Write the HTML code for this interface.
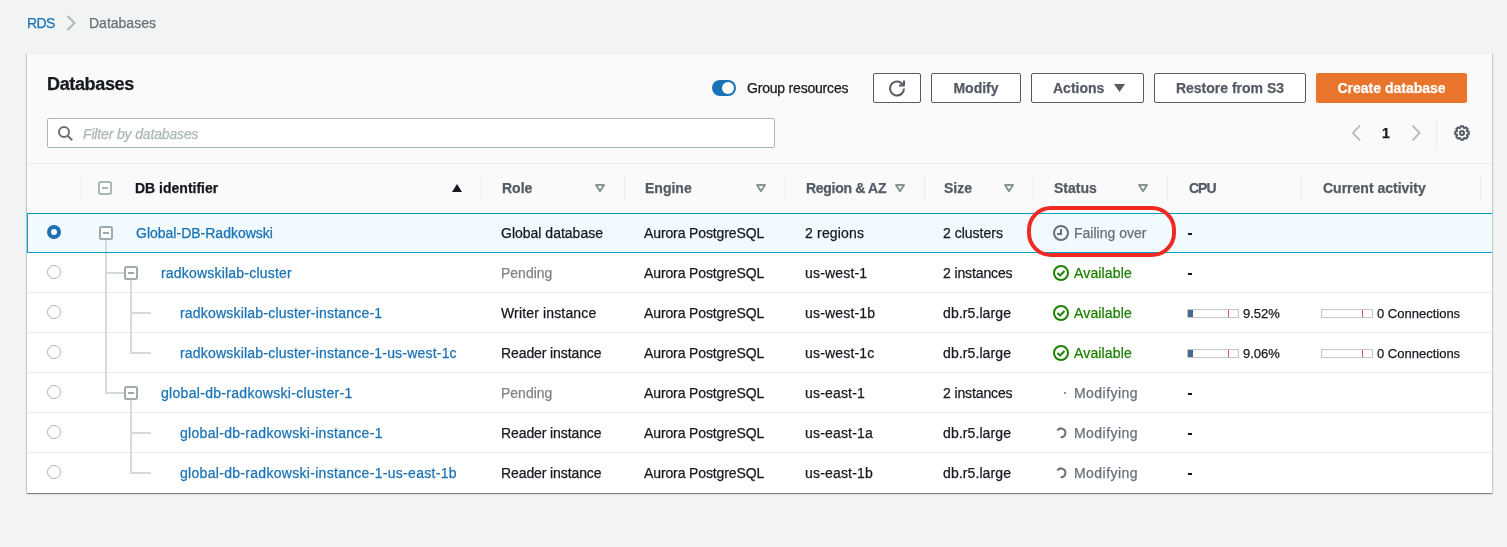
<!DOCTYPE html>
<html><head><meta charset="utf-8">
<style>
*{box-sizing:border-box;margin:0;padding:0}
html,body{-webkit-font-smoothing:antialiased;-webkit-text-stroke:0.25px currentColor;width:1507px;height:547px;overflow:hidden;background:#f2f3f3;font-family:"Liberation Sans",sans-serif;font-size:14px;color:#16191f}
.a{position:absolute;white-space:nowrap}
svg{position:absolute;overflow:visible}
#panel{position:absolute;left:27px;top:53px;width:1465px;height:440px;border-top:1px solid #eaeded;background:#fafafa;box-shadow:0 1px 1px 0 rgba(0,28,36,.3),1px 1px 1px 0 rgba(0,28,36,.15),-1px 1px 1px 0 rgba(0,28,36,.15)}
.btn{position:absolute;top:73px;height:30px;border:1px solid #545b64;border-radius:2px;background:#fff;color:#545b64;font-weight:700;line-height:28px;text-align:center}
.hdr{position:absolute;top:164px;line-height:49px;font-weight:700;color:#545b64}
.div{position:absolute;top:176px;width:1px;height:24px;background:#eaeded}
.row{position:absolute;left:27px;width:1465px;height:40px;background:#fff;border-top:1px solid #eaeded}
.c{position:absolute;line-height:40px;white-space:nowrap}
.lnk{color:#1a72b5}
</style></head><body><div style="position:absolute;left:0;top:0;width:1507px;height:547px;will-change:transform">
<!-- breadcrumb -->
<div class="a" style="left:27px;top:13px;line-height:20px;letter-spacing:-0.6px;color:#1a72b5">RDS</div>
<svg style="left:0;top:0" width="1" height="1"><polyline points="67.5,16 74.5,23 67.5,30" fill="none" stroke="#aab7b8" stroke-width="1.9"/></svg>
<div class="a" style="left:89px;top:13px;line-height:20px;color:#687078">Databases</div>

<div id="panel"></div>
<div class="a" style="left:47px;top:72px;line-height:24px;font-size:18px;font-weight:700;letter-spacing:-0.35px;color:#16191f">Databases</div>

<!-- toggle -->
<div class="a" style="left:712px;top:80px;width:24px;height:16px;border-radius:8px;background:#1a72b5"></div>
<div class="a" style="left:722px;top:82px;width:12px;height:12px;border-radius:6px;background:#fff"></div>
<div class="a" style="left:747px;top:78px;line-height:20px;letter-spacing:-0.2px;color:#16191f">Group resources</div>

<div class="btn" style="left:873px;width:48px"></div>
<svg style="left:889px;top:80px" width="16" height="16" viewBox="0 0 16 16"><path d="M10 5.5h5V0.5" fill="none" stroke="#545b64" stroke-width="2" stroke-linejoin="round"/><path d="M15 8.5a7 7 0 1 1-3.5-6.06L14.5 5" fill="none" stroke="#545b64" stroke-width="2"/></svg>
<div class="btn" style="left:931px;width:90px">Modify</div>
<div class="btn" style="left:1031px;width:113px;text-align:left;padding-left:21px">Actions</div>
<svg style="left:1114px;top:84px" width="11" height="8"><polygon points="0,0 11,0 5.5,8" fill="#545b64"/></svg>
<div class="btn" style="left:1154px;width:152px">Restore from S3</div>
<div class="btn" style="left:1316px;width:151px;background:#e9742b;border-color:#e9742b;color:#fff">Create database</div>

<!-- filter -->
<div class="a" style="left:47px;top:118px;width:728px;height:30px;background:#fff;border:1px solid #aab7b8;border-radius:2px"></div>
<svg style="left:56px;top:124px" width="16" height="16" viewBox="0 0 16 16"><circle cx="8" cy="8" r="5" fill="none" stroke="#687078" stroke-width="2"/><path d="M11.5 11.5 16.2 16.2" stroke="#687078" stroke-width="2"/></svg>
<div class="a" style="left:83px;top:124px;line-height:20px;font-style:italic;letter-spacing:-0.15px;color:#aab7b8">Filter by databases</div>

<!-- pagination -->
<svg style="left:0;top:0" width="1" height="1"><polyline points="1360,125.5 1353,133 1360,140.5" fill="none" stroke="#aab7b8" stroke-width="1.8"/><polyline points="1412.5,125.5 1419.5,133 1412.5,140.5" fill="none" stroke="#aab7b8" stroke-width="1.8"/></svg>
<div class="a" style="left:1382px;top:123px;line-height:20px;font-weight:700;color:#16191f">1</div>
<div class="a" style="left:1436px;top:118px;width:1px;height:30px;background:#eaeded"></div>
<svg style="left:1454px;top:125px" width="16" height="16" viewBox="0 0 16 16"><path d="M6.24 2.89 L6.80 1.20 L9.20 1.20 L9.76 2.89 L10.37 3.15 L11.96 2.35 L13.65 4.04 L12.85 5.63 L13.11 6.24 L14.80 6.80 L14.80 9.20 L13.11 9.76 L12.85 10.37 L13.65 11.96 L11.96 13.65 L10.37 12.85 L9.76 13.11 L9.20 14.80 L6.80 14.80 L6.24 13.11 L5.63 12.85 L4.04 13.65 L2.35 11.96 L3.15 10.37 L2.89 9.76 L1.20 9.20 L1.20 6.80 L2.89 6.24 L3.15 5.63 L2.35 4.04 L4.04 2.35 L5.63 3.15Z" fill="none" stroke="#545b64" stroke-width="2" stroke-linejoin="round"/><circle cx="8" cy="8" r="2" fill="none" stroke="#545b64" stroke-width="2"/></svg>

<!-- table header -->
<div class="a" style="left:27px;top:163px;width:1465px;height:1px;background:#eaeded"></div>
<div class="div" style="left:81px"></div>
<svg style="left:98px;top:181px" width="14" height="14" viewBox="0 0 14 14"><rect x="1" y="1" width="12" height="12" rx="1.5" fill="#fff" stroke="#aab7b8" stroke-width="2"/><rect x="4" y="6" width="6" height="2" fill="#aab7b8"/></svg>
<div class="hdr" style="left:135px;color:#16191f">DB identifier</div>
<svg style="left:452px;top:184px" width="10" height="8"><polygon points="5,0 10,8 0,8" fill="#16191f"/></svg>
<div class="div" style="left:481px"></div>
<div class="hdr" style="left:502px">Role</div>
<div class="div" style="left:624px"></div>
<div class="hdr" style="left:645px">Engine</div>
<div class="div" style="left:785px"></div>
<div class="hdr" style="left:806px;letter-spacing:-0.3px">Region &amp; AZ</div>
<div class="div" style="left:924px"></div>
<div class="hdr" style="left:944px">Size</div>
<div class="div" style="left:1033px"></div>
<div class="hdr" style="left:1054px">Status</div>
<div class="div" style="left:1167px"></div>
<div class="hdr" style="left:1189px;letter-spacing:-1px">CPU</div>
<div class="div" style="left:1301px"></div>
<div class="hdr" style="left:1323px">Current activity</div>
<div class="div" style="left:1480px"></div>
<svg style="left:0;top:0" width="1" height="1" fill="none" stroke="#879596" stroke-width="2" stroke-linejoin="round"><polygon points="596,185 604,185 600,191.2"/><polygon points="757,185 765,185 761,191.2"/><polygon points="896,185 904,185 900,191.2"/><polygon points="1005,185 1013,185 1009,191.2"/><polygon points="1139,185 1147,185 1143,191.2"/></svg>

<!-- rows -->
<div class="a" style="left:27px;top:213px;width:1465px;height:280px;background:#fff"></div>
<div class="a" style="left:27px;top:213px;width:1465px;height:40px;background:#f1faff;border-top:1px solid #00a1c9;border-bottom:1px solid #00a1c9;border-left:1px solid #00a1c9"></div>
<div class="a" style="left:27px;top:292px;width:1465px;height:1px;background:#eaeded"></div>
<div class="a" style="left:27px;top:332px;width:1465px;height:1px;background:#eaeded"></div>
<div class="a" style="left:27px;top:372px;width:1465px;height:1px;background:#eaeded"></div>
<div class="a" style="left:27px;top:412px;width:1465px;height:1px;background:#eaeded"></div>
<div class="a" style="left:27px;top:452px;width:1465px;height:1px;background:#eaeded"></div>
<div class="a" style="left:105px;top:240px;width:2px;height:12px;background:#d5dbdb"></div>
<div class="a" style="left:105px;top:253px;width:2px;height:140px;background:#d5dbdb"></div>
<div class="a" style="left:105px;top:272px;width:19px;height:2px;background:#d5dbdb"></div>
<div class="a" style="left:105px;top:392px;width:19px;height:2px;background:#d5dbdb"></div>
<div class="a" style="left:130px;top:280px;width:2px;height:73px;background:#d5dbdb"></div>
<div class="a" style="left:130px;top:312px;width:21px;height:2px;background:#d5dbdb"></div>
<div class="a" style="left:130px;top:352px;width:21px;height:2px;background:#d5dbdb"></div>
<div class="a" style="left:130px;top:400px;width:2px;height:73px;background:#d5dbdb"></div>
<div class="a" style="left:130px;top:432px;width:21px;height:2px;background:#d5dbdb"></div>
<div class="a" style="left:130px;top:472px;width:21px;height:2px;background:#d5dbdb"></div>
<svg style="left:99px;top:226px" width="14" height="14" viewBox="0 0 14 14"><rect x="1" y="1" width="12" height="12" rx="1.5" fill="#fff" stroke="#9eaaab" stroke-width="2"/><rect x="4" y="6" width="6" height="2" fill="#9eaaab"/></svg>
<svg style="left:124px;top:266px" width="14" height="14" viewBox="0 0 14 14"><rect x="1" y="1" width="12" height="12" rx="1.5" fill="#fff" stroke="#9eaaab" stroke-width="2"/><rect x="4" y="6" width="6" height="2" fill="#9eaaab"/></svg>
<svg style="left:124px;top:386px" width="14" height="14" viewBox="0 0 14 14"><rect x="1" y="1" width="12" height="12" rx="1.5" fill="#fff" stroke="#9eaaab" stroke-width="2"/><rect x="4" y="6" width="6" height="2" fill="#9eaaab"/></svg>
<svg style="left:47px;top:225px" width="14" height="14" viewBox="0 0 14 14"><circle cx="7" cy="7" r="5" fill="#fff" stroke="#1a72b5" stroke-width="4"/></svg>
<div class="c lnk" style="left:136px;top:213px;letter-spacing:0px">Global-DB-Radkowski</div>
<div class="c" style="left:501px;top:213px;color:#16191f;letter-spacing:0px">Global database</div>
<div class="c" style="left:644px;top:213px;letter-spacing:-0.12px">Aurora PostgreSQL</div>
<div class="c" style="left:805px;top:213px;letter-spacing:0.18px">2 regions</div>
<div class="c" style="left:943px;top:213px;letter-spacing:0px">2 clusters</div>
<svg style="left:1053px;top:225px" width="16" height="16" viewBox="0 0 16 16"><circle cx="8" cy="8" r="7" fill="none" stroke="#687078" stroke-width="2"/><path d="M8 4V9H4" fill="none" stroke="#687078" stroke-width="2"/></svg>
<div class="c" style="left:1074px;top:213px;color:#687078">Failing over</div>
<div class="a" style="left:1188px;top:233px;width:4px;height:2px;background:#16191f"></div>
<svg style="left:47px;top:265px" width="14" height="14" viewBox="0 0 14 14"><circle cx="7" cy="7" r="6.5" fill="#fff" stroke="#aab7b8" stroke-width="1"/></svg>
<div class="c lnk" style="left:161px;top:253px;letter-spacing:0.2px">radkowskilab-cluster</div>
<div class="c" style="left:501px;top:253px;color:#818486;letter-spacing:0px">Pending</div>
<div class="c" style="left:644px;top:253px;letter-spacing:-0.12px">Aurora PostgreSQL</div>
<div class="c" style="left:805px;top:253px;letter-spacing:0.18px">us-west-1</div>
<div class="c" style="left:943px;top:253px;letter-spacing:-0.12px">2 instances</div>
<svg style="left:1053px;top:265px" width="16" height="16" viewBox="0 0 16 16"><circle cx="8" cy="8" r="7" fill="none" stroke="#1d8102" stroke-width="2"/><path d="M4.5 8l2.5 2.5 4.5-4.5" fill="none" stroke="#1d8102" stroke-width="2"/></svg>
<div class="c" style="left:1074px;top:253px;color:#1d8102;letter-spacing:0.15px">Available</div>
<div class="a" style="left:1188px;top:273px;width:4px;height:2px;background:#16191f"></div>
<svg style="left:47px;top:305px" width="14" height="14" viewBox="0 0 14 14"><circle cx="7" cy="7" r="6.5" fill="#fff" stroke="#aab7b8" stroke-width="1"/></svg>
<div class="c lnk" style="left:180px;top:293px;letter-spacing:0.2px">radkowskilab-cluster-instance-1</div>
<div class="c" style="left:501px;top:293px;color:#16191f;letter-spacing:0.15px">Writer instance</div>
<div class="c" style="left:644px;top:293px;letter-spacing:-0.12px">Aurora PostgreSQL</div>
<div class="c" style="left:805px;top:293px;letter-spacing:0.18px">us-west-1b</div>
<div class="c" style="left:943px;top:293px;letter-spacing:0.1px">db.r5.large</div>
<svg style="left:1053px;top:305px" width="16" height="16" viewBox="0 0 16 16"><circle cx="8" cy="8" r="7" fill="none" stroke="#1d8102" stroke-width="2"/><path d="M4.5 8l2.5 2.5 4.5-4.5" fill="none" stroke="#1d8102" stroke-width="2"/></svg>
<div class="c" style="left:1074px;top:293px;color:#1d8102;letter-spacing:0.15px">Available</div>
<div class="a" style="left:1187px;top:309px;width:52px;height:9px;border:1px solid #c6c6c6;background:#fff"></div>
<div class="a" style="left:1188px;top:310px;width:5px;height:7px;background:#44698e"></div>
<div class="a" style="left:1228px;top:310px;width:1px;height:7px;background:#e05252"></div>
<div class="c" style="left:1243px;top:293px;font-size:13px;margin-top:1px">9.52%</div>
<div class="a" style="left:1321px;top:309px;width:52px;height:9px;border:1px solid #c6c6c6;background:#fff"></div>
<div class="a" style="left:1362px;top:310px;width:1px;height:7px;background:#e05252"></div>
<div class="c" style="left:1377px;top:293px;font-size:13px;margin-top:1px">0 Connections</div>
<svg style="left:47px;top:345px" width="14" height="14" viewBox="0 0 14 14"><circle cx="7" cy="7" r="6.5" fill="#fff" stroke="#aab7b8" stroke-width="1"/></svg>
<div class="c lnk" style="left:180px;top:333px;letter-spacing:0.2px">radkowskilab-cluster-instance-1-us-west-1c</div>
<div class="c" style="left:501px;top:333px;color:#16191f;letter-spacing:-0.1px">Reader instance</div>
<div class="c" style="left:644px;top:333px;letter-spacing:-0.12px">Aurora PostgreSQL</div>
<div class="c" style="left:805px;top:333px;letter-spacing:0.18px">us-west-1c</div>
<div class="c" style="left:943px;top:333px;letter-spacing:0.1px">db.r5.large</div>
<svg style="left:1053px;top:345px" width="16" height="16" viewBox="0 0 16 16"><circle cx="8" cy="8" r="7" fill="none" stroke="#1d8102" stroke-width="2"/><path d="M4.5 8l2.5 2.5 4.5-4.5" fill="none" stroke="#1d8102" stroke-width="2"/></svg>
<div class="c" style="left:1074px;top:333px;color:#1d8102;letter-spacing:0.15px">Available</div>
<div class="a" style="left:1187px;top:349px;width:52px;height:9px;border:1px solid #c6c6c6;background:#fff"></div>
<div class="a" style="left:1188px;top:350px;width:5px;height:7px;background:#44698e"></div>
<div class="a" style="left:1228px;top:350px;width:1px;height:7px;background:#e05252"></div>
<div class="c" style="left:1243px;top:333px;font-size:13px;margin-top:1px">9.06%</div>
<div class="a" style="left:1321px;top:349px;width:52px;height:9px;border:1px solid #c6c6c6;background:#fff"></div>
<div class="a" style="left:1362px;top:350px;width:1px;height:7px;background:#e05252"></div>
<div class="c" style="left:1377px;top:333px;font-size:13px;margin-top:1px">0 Connections</div>
<svg style="left:47px;top:385px" width="14" height="14" viewBox="0 0 14 14"><circle cx="7" cy="7" r="6.5" fill="#fff" stroke="#aab7b8" stroke-width="1"/></svg>
<div class="c lnk" style="left:161px;top:373px;letter-spacing:0.3px">global-db-radkowski-cluster-1</div>
<div class="c" style="left:501px;top:373px;color:#818486;letter-spacing:0px">Pending</div>
<div class="c" style="left:644px;top:373px;letter-spacing:-0.12px">Aurora PostgreSQL</div>
<div class="c" style="left:805px;top:373px;letter-spacing:0.18px">us-east-1</div>
<div class="c" style="left:943px;top:373px;letter-spacing:-0.12px">2 instances</div>
<div class="a" style="left:1064px;top:392px;width:2px;height:2px;border-radius:1px;background:#687078"></div>
<div class="c" style="left:1074px;top:373px;color:#687078;letter-spacing:0.45px">Modifying</div>
<div class="a" style="left:1188px;top:393px;width:4px;height:2px;background:#16191f"></div>
<svg style="left:47px;top:425px" width="14" height="14" viewBox="0 0 14 14"><circle cx="7" cy="7" r="6.5" fill="#fff" stroke="#aab7b8" stroke-width="1"/></svg>
<div class="c lnk" style="left:180px;top:413px;letter-spacing:0.3px">global-db-radkowski-instance-1</div>
<div class="c" style="left:501px;top:413px;color:#16191f;letter-spacing:-0.1px">Reader instance</div>
<div class="c" style="left:644px;top:413px;letter-spacing:-0.12px">Aurora PostgreSQL</div>
<div class="c" style="left:805px;top:413px;letter-spacing:0.18px">us-east-1a</div>
<div class="c" style="left:943px;top:413px;letter-spacing:0.1px">db.r5.large</div>
<svg style="left:1053px;top:425px" width="16" height="16" viewBox="0 0 16 16"><path d="M4.3 5.5A4.4 4.4 0 1 1 7.6 12.3" fill="none" stroke="#687078" stroke-width="2"/></svg>
<div class="c" style="left:1074px;top:413px;color:#687078;letter-spacing:0.45px">Modifying</div>
<div class="a" style="left:1188px;top:433px;width:4px;height:2px;background:#16191f"></div>
<svg style="left:47px;top:465px" width="14" height="14" viewBox="0 0 14 14"><circle cx="7" cy="7" r="6.5" fill="#fff" stroke="#aab7b8" stroke-width="1"/></svg>
<div class="c lnk" style="left:180px;top:453px;letter-spacing:0.3px">global-db-radkowski-instance-1-us-east-1b</div>
<div class="c" style="left:501px;top:453px;color:#16191f;letter-spacing:-0.1px">Reader instance</div>
<div class="c" style="left:644px;top:453px;letter-spacing:-0.12px">Aurora PostgreSQL</div>
<div class="c" style="left:805px;top:453px;letter-spacing:0.18px">us-east-1b</div>
<div class="c" style="left:943px;top:453px;letter-spacing:0.1px">db.r5.large</div>
<svg style="left:1053px;top:465px" width="16" height="16" viewBox="0 0 16 16"><path d="M4.3 5.5A4.4 4.4 0 1 1 7.6 12.3" fill="none" stroke="#687078" stroke-width="2"/></svg>
<div class="c" style="left:1074px;top:453px;color:#687078;letter-spacing:0.45px">Modifying</div>
<div class="a" style="left:1188px;top:473px;width:4px;height:2px;background:#16191f"></div>
<div class="a" style="left:1027px;top:206px;width:149px;height:51px;border:4px solid #ee2a22;border-radius:24px"></div>
</div></body></html>
